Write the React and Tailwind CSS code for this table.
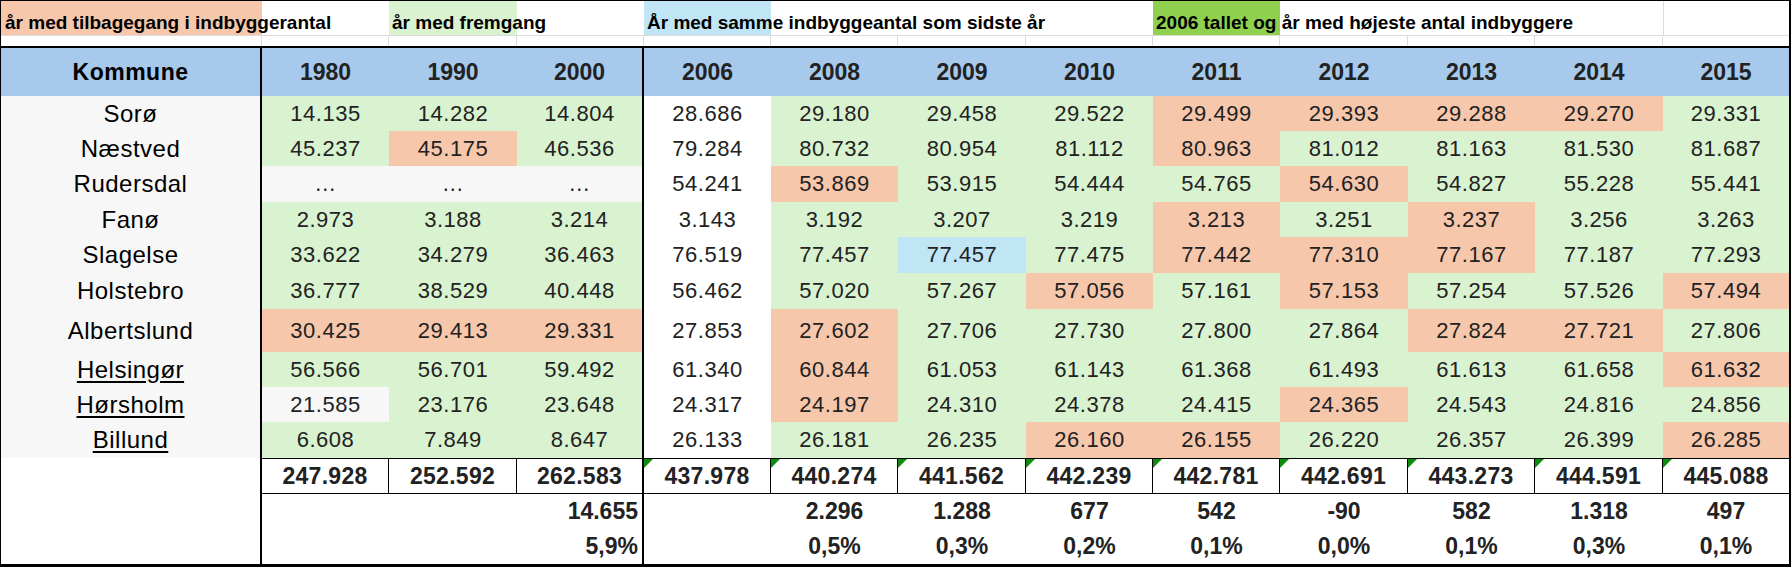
const COLS =
  'grid grid-cols-[261px_127px_128px_127px_127px_127px_128px_127px_127px_128px_127px_128px_126px]';

const FILL = {
  g: 'bg-[#d9f2d0]',
  s: 'bg-[#f7c7ac]',
  w: 'bg-white',
  x: 'bg-[#f7f7f7]',
  b: 'bg-[#c0e6f5]',
};

const YEARS = ['1980', '1990', '2000', '2006', '2008', '2009', '2010', '2011', '2012', '2013', '2014', '2015'];

// hver celle: "tal:farve"
const ROWS = [
  { name: 'Sorø', h: 'h-[35px]', cells: '14.135:g 14.282:g 14.804:g 28.686:w 29.180:g 29.458:g 29.522:g 29.499:s 29.393:s 29.288:s 29.270:s 29.331:g' },
  { name: 'Næstved', h: 'h-[35px]', cells: '45.237:g 45.175:s 46.536:g 79.284:w 80.732:g 80.954:g 81.112:g 80.963:s 81.012:g 81.163:g 81.530:g 81.687:g' },
  { name: 'Rudersdal', h: 'h-[36px]', cells: '…:x …:x …:x 54.241:w 53.869:s 53.915:g 54.444:g 54.765:g 54.630:s 54.827:g 55.228:g 55.441:g' },
  { name: 'Fanø', h: 'h-[35px]', cells: '2.973:g 3.188:g 3.214:g 3.143:w 3.192:g 3.207:g 3.219:g 3.213:s 3.251:g 3.237:s 3.256:g 3.263:g' },
  { name: 'Slagelse', h: 'h-[36px]', cells: '33.622:g 34.279:g 36.463:g 76.519:w 77.457:g 77.457:b 77.475:g 77.442:s 77.310:s 77.167:s 77.187:g 77.293:g' },
  { name: 'Holstebro', h: 'h-[36px]', cells: '36.777:g 38.529:g 40.448:g 56.462:w 57.020:g 57.267:g 57.056:s 57.161:g 57.153:s 57.254:g 57.526:g 57.494:s' },
  { name: 'Albertslund', h: 'h-[43px]', cells: '30.425:s 29.413:s 29.331:s 27.853:w 27.602:s 27.706:g 27.730:g 27.800:g 27.864:g 27.824:s 27.721:s 27.806:g' },
  { name: 'Helsingør', link: true, h: 'h-[35px]', cells: '56.566:g 56.701:g 59.492:g 61.340:w 60.844:s 61.053:g 61.143:g 61.368:g 61.493:g 61.613:g 61.658:g 61.632:s' },
  { name: 'Hørsholm', link: true, h: 'h-[35px]', cells: '21.585:x 23.176:g 23.648:g 24.317:w 24.197:s 24.310:g 24.378:g 24.415:g 24.365:s 24.543:g 24.816:g 24.856:g' },
  { name: 'Billund', link: true, h: 'h-[36px]', cells: '6.608:g 7.849:g 8.647:g 26.133:w 26.181:g 26.235:g 26.160:s 26.155:s 26.220:g 26.357:g 26.399:g 26.285:s' },
];

const TOTALS = ['247.928', '252.592', '262.583', '437.978', '440.274', '441.562', '442.239', '442.781', '442.691', '443.273', '444.591', '445.088'];
const DIFF = ['', '', '14.655', '', '2.296', '1.288', '677', '542', '-90', '582', '1.318', '497'];
const PCT = ['', '', '5,9%', '', '0,5%', '0,3%', '0,2%', '0,1%', '0,0%', '0,1%', '0,3%', '0,1%'];

function Triangle() {
  return (
    <svg className="absolute left-0 top-0" width="9" height="9" viewBox="0 0 9 9">
      <polygon points="0,0 9,0 0,9" fill="#118a11" />
    </svg>
  );
}

function LegendRow() {
  const txt = 'whitespace-nowrap text-[19px] font-bold leading-none text-black';
  return (
    <div className={`${COLS} h-[34px]`}>
      <div className="flex items-end bg-[#f7c7ac] pb-[3px] pl-[4px]">
        <span className={txt}>år med tilbagegang i indbyggerantal</span>
      </div>
      <div />
      <div className="flex items-end bg-[#d9f2d0] pb-[3px] pl-[3px]">
        <span className={txt}>år med fremgang</span>
      </div>
      <div />
      <div className="flex items-end bg-[#c0e6f5] pb-[3px] pl-[3px]">
        <span className={txt}>År med samme indbyggeantal som sidste år</span>
      </div>
      <div />
      <div />
      <div />
      <div className="flex items-end bg-[#8fd14f] pb-[3px] pl-[3px]">
        <span className={txt}>2006 tallet og år med højeste antal indbyggere</span>
      </div>
      <div />
      <div />
      <div />
      <div className="border-l border-[#dcdcdc]" />
    </div>
  );
}

export default function App() {
  return (
    <div className="h-[567px] w-[1791px] border-b-[3px] border-l border-r-2 border-t border-black bg-white font-['Liberation_Sans',Arial,sans-serif] text-[#222]">
      <LegendRow />

      {/* tom række med gitterlinjer */}
      <div className={`${COLS} h-[11px] border-t border-[#dcdcdc]`}>
        {Array.from({ length: 13 }).map((_, i) => (
          <div key={i} className={i < 12 ? 'border-r border-[#dcdcdc]' : ''} />
        ))}
      </div>

      {/* overskrift */}
      <div className={`${COLS} h-[50px] border-t-2 border-black bg-[#a6c9ec]`}>
        <div className="flex items-center justify-center border-r-2 border-black text-[23px] font-bold tracking-[0.5px] text-black">
          Kommune
        </div>
        {YEARS.map((y, i) => (
          <div
            key={y}
            className={`flex items-center justify-center text-[23px] font-bold ${i === 2 ? 'border-r-2 border-black' : ''}`}
          >
            {y}
          </div>
        ))}
      </div>

      {/* data */}
      {ROWS.map((r) => (
        <div key={r.name} className={`${COLS} ${r.h}`}>
          <div className="flex items-center justify-center border-r-2 border-black bg-[#f7f7f7] text-[24px] leading-none tracking-[0.5px] text-black">
            <span className={r.link ? 'underline underline-offset-[3px]' : ''}>{r.name}</span>
          </div>
          {r.cells.split(' ').map((c, i) => {
            const [v, f] = c.split(':');
            return (
              <div
                key={i}
                className={`flex items-center justify-center text-[22px] leading-none tracking-[0.5px] ${FILL[f]} ${i === 2 ? 'border-r-2 border-black' : ''}`}
              >
                {v}
              </div>
            );
          })}
        </div>
      ))}

      {/* sum */}
      <div className={`${COLS} h-[36px]`}>
        <div className="border-r-2 border-black" />
        {TOTALS.map((t, i) => (
          <div
            key={i}
            className={`relative flex items-center justify-center border-y border-black text-[23px] font-bold leading-none tracking-[0.3px] ${
              i === 2 ? 'border-r-2' : i < 11 ? 'border-r' : ''
            }`}
          >
            {i >= 3 && <Triangle />}
            {t}
          </div>
        ))}
      </div>

      {[DIFF, PCT].map((row, ri) => (
        <div key={ri} className={`${COLS} h-[35px]`}>
          <div className="border-r-2 border-black" />
          {row.map((v, i) => (
            <div
              key={i}
              className={`flex items-center text-[23px] font-bold leading-none ${
                i === 2 ? 'justify-end border-r-2 border-black pr-[4px]' : 'justify-center'
              }`}
            >
              {v}
            </div>
          ))}
        </div>
      ))}
    </div>
  );
}
